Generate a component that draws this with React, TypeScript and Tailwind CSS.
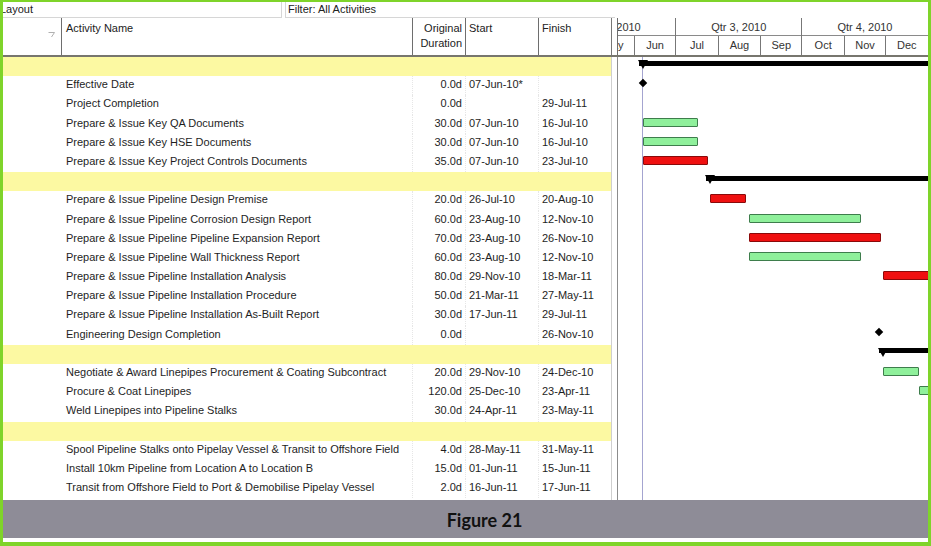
import React from "react";

type Task = {
  band?: false;
  name: string;
  dur: string;
  start?: string;
  finish?: string;
  bar?: "green" | "red" | "ms-start" | "ms-finish";
};
type Band = { band: true; from: string };
type Row = Task | Band;

const MONTHS = ["Jan", "Feb", "Mar", "Apr", "May", "Jun", "Jul", "Aug", "Sep", "Oct", "Nov", "Dec"];
const DAY = 86400000;
const PX_PER_DAY = 1.372;
const JUN_1 = Date.UTC(2010, 5, 1);
// x of 1 Jun 2010 inside the gantt pane
const X0 = 17;

function toTime(s: string) {
  const [d, m, y] = s.replace("*", "").split("-");
  return Date.UTC(2000 + Number(y), MONTHS.indexOf(m), Number(d));
}
const xAt = (t: number) => X0 + ((t - JUN_1) / DAY) * PX_PER_DAY;

const rows: Row[] = [
  { band: true, from: "07-Jun-10" },
  { name: "Effective Date", dur: "0.0d", start: "07-Jun-10*", bar: "ms-start" },
  { name: "Project Completion", dur: "0.0d", finish: "29-Jul-11", bar: "ms-finish" },
  { name: "Prepare & Issue Key QA Documents", dur: "30.0d", start: "07-Jun-10", finish: "16-Jul-10", bar: "green" },
  { name: "Prepare & Issue Key HSE Documents", dur: "30.0d", start: "07-Jun-10", finish: "16-Jul-10", bar: "green" },
  { name: "Prepare & Issue Key Project Controls Documents", dur: "35.0d", start: "07-Jun-10", finish: "23-Jul-10", bar: "red" },
  { band: true, from: "26-Jul-10" },
  { name: "Prepare & Issue Pipeline Design Premise", dur: "20.0d", start: "26-Jul-10", finish: "20-Aug-10", bar: "red" },
  { name: "Prepare & Issue Pipeline Corrosion Design Report", dur: "60.0d", start: "23-Aug-10", finish: "12-Nov-10", bar: "green" },
  { name: "Prepare & Issue Pipeline Pipeline Expansion Report", dur: "70.0d", start: "23-Aug-10", finish: "26-Nov-10", bar: "red" },
  { name: "Prepare & Issue Pipeline Wall Thickness Report", dur: "60.0d", start: "23-Aug-10", finish: "12-Nov-10", bar: "green" },
  { name: "Prepare & Issue Pipeline Installation Analysis", dur: "80.0d", start: "29-Nov-10", finish: "18-Mar-11", bar: "red" },
  { name: "Prepare & Issue Pipeline Installation Procedure", dur: "50.0d", start: "21-Mar-11", finish: "27-May-11", bar: "red" },
  { name: "Prepare & Issue Pipeline Installation As-Built Report", dur: "30.0d", start: "17-Jun-11", finish: "29-Jul-11", bar: "green" },
  { name: "Engineering Design Completion", dur: "0.0d", finish: "26-Nov-10", bar: "ms-finish" },
  { band: true, from: "29-Nov-10" },
  { name: "Negotiate & Award Linepipes Procurement & Coating Subcontract", dur: "20.0d", start: "29-Nov-10", finish: "24-Dec-10", bar: "green" },
  { name: "Procure & Coat Linepipes", dur: "120.0d", start: "25-Dec-10", finish: "23-Apr-11", bar: "green" },
  { name: "Weld Linepipes into Pipeline Stalks", dur: "30.0d", start: "24-Apr-11", finish: "23-May-11", bar: "green" },
  { band: true, from: "28-May-11" },
  { name: "Spool Pipeline Stalks onto Pipelay Vessel & Transit to Offshore Field", dur: "4.0d", start: "28-May-11", finish: "31-May-11", bar: "red" },
  { name: "Install 10km Pipeline from Location A to Location B", dur: "15.0d", start: "01-Jun-11", finish: "15-Jun-11", bar: "red" },
  { name: "Transit from Offshore Field to Port & Demobilise Pipelay Vessel", dur: "2.0d", start: "16-Jun-11", finish: "17-Jun-11", bar: "red" },
];

const quarters = [
  { label: "Qtr 2, 2010", from: Date.UTC(2010, 3, 1), to: Date.UTC(2010, 6, 1) },
  { label: "Qtr 3, 2010", from: Date.UTC(2010, 6, 1), to: Date.UTC(2010, 9, 1) },
  { label: "Qtr 4, 2010", from: Date.UTC(2010, 9, 1), to: Date.UTC(2011, 0, 1) },
];

const months = Array.from({ length: 9 }, (_, i) => {
  const from = Date.UTC(2010, 3 + i, 1);
  const to = Date.UTC(2010, 4 + i, 1);
  return { label: MONTHS[(3 + i) % 12], from, to };
});

function GanttRow({ row }: { row: Row }) {
  if (row.band) {
    const left = xAt(toTime(row.from)) - 4;
    return (
      <div className="relative h-[19.2px]">
        <div className="absolute top-[3.5px] right-0 h-[5px] bg-black" style={{ left }} />
        <svg className="absolute top-[3px]" style={{ left: left - 1 }} width="10" height="10" viewBox="0 0 10 10">
          <polygon points="0,0 10,0 5,9" fill="#000" />
        </svg>
      </div>
    );
  }
  let mark: React.ReactNode = null;
  if (row.bar === "ms-start" || row.bar === "ms-finish") {
    const d = row.bar === "ms-start" ? row.start! : row.finish!;
    const x = xAt(toTime(d)) - 0.5;
    mark = <div className="absolute top-[3.5px] h-[6px] w-[6px] rotate-45 bg-black" style={{ left: x - 3 }} />;
  } else if (row.bar && row.start && row.finish) {
    const left = xAt(toTime(row.start));
    const width = xAt(toTime(row.finish) + DAY) - left;
    mark = (
      <div
        className={
          row.bar === "green"
            ? "absolute top-[3px] h-[9px] rounded-[1px] border border-[#3e7d4c] bg-[#8ff09b]"
            : "absolute top-[3px] h-[9px] rounded-[1px] border border-[#8a0a0a] bg-[#ef1010]"
        }
        style={{ left, width }}
      />
    );
  }
  return <div className="relative h-[19.2px]">{mark}</div>;
}

function TableRow({ row }: { row: Row }) {
  if (row.band) return <div className="h-[19.2px] bg-[#fcf9a2]" />;
  return (
    <div className="flex h-[19.2px] text-[11px] leading-[14px] text-[#1e1e1e]">
      <div className="w-[58px]" />
      <div className="w-[351px] truncate pl-[5px] pt-[1px]">{row.name}</div>
      <div className="w-[53px] border-l border-dotted border-[#e6e6e6] pr-[3px] pt-[1px] text-right">{row.dur}</div>
      <div className="w-[73px] border-l border-dotted border-[#e6e6e6] pl-[3px] pt-[1px]">{row.start ?? ""}</div>
      <div className="w-[73px] border-l border-dotted border-[#e6e6e6] pl-[3px] pt-[1px]">{row.finish ?? ""}</div>
    </div>
  );
}

export default function App() {
  return (
    <div className="h-[546px] w-[931px] bg-[#7fd42a] pb-[4px] pl-[3px] pr-[3px] pt-[2px] font-['Liberation_Sans',Arial,sans-serif]">
      <div className="flex h-full flex-col overflow-hidden bg-white">
        {/* layout / filter bar */}
        <div className="flex h-[16px] text-[11px] leading-[15px] text-[#222]">
          <div className="-ml-[3px] w-[282px] border-b border-r border-[#d6d6d6] pl-0">Layout</div>
          <div className="ml-[3px] w-[330px] border-b border-l border-[#d6d6d6] pl-[2px]">Filter: All Activities</div>
        </div>

        {/* column headers */}
        <div className="flex h-[39px] border-b-2 border-[#77766e]">
          <div className="flex w-[609px] border-r border-[#777] text-[11px] leading-[15px] text-[#222]">
            <div className="flex w-[58px] items-start justify-end pr-[6px] pt-[14px]">
              <svg width="7" height="6" viewBox="0 0 7 6">
                <polyline points="0.5,0.5 6.5,0.5 3.5,5" fill="none" stroke="#b0b0b0" strokeWidth="1" />
              </svg>
            </div>
            <div className="w-[351px] border-l border-[#6e6e6e] pl-[4px] pt-[3px]">Activity Name</div>
            <div className="w-[53px] border-l border-[#6e6e6e] pr-[3px] pt-[3px] text-right">
              Original
              <br />
              Duration
            </div>
            <div className="w-[73px] border-l border-[#6e6e6e] pl-[3px] pt-[3px]">Start</div>
            <div className="w-[73px] border-l border-[#6e6e6e] pl-[3px] pt-[3px]">Finish</div>
          </div>
          <div className="w-[5px]" />
          <div className="relative flex-1 overflow-hidden border-l border-[#6e6e6e] text-[11px] leading-[18px] text-[#333]">
            <div className="relative h-[18px] border-b border-[#8a8a8a]">
              {quarters.map((q) => (
                <div
                  key={q.label}
                  className="absolute top-0 h-[18px] border-r border-[#777] text-center"
                  style={{ left: xAt(q.from), width: xAt(q.to) - xAt(q.from) }}
                >
                  {q.label}
                </div>
              ))}
            </div>
            <div className="relative h-[19px]">
              {months.map((m) => (
                <div
                  key={m.from}
                  className="absolute top-0 h-[19px] border-r border-[#777] text-center"
                  style={{ left: xAt(m.from), width: xAt(m.to) - xAt(m.from) }}
                >
                  {m.label}
                </div>
              ))}
            </div>
          </div>
        </div>

        {/* activities and bars */}
        <div className="flex h-[443px]">
          <div className="w-[609px] border-r border-[#cfcfcf]">
            {rows.map((r, i) => (
              <TableRow key={i} row={r} />
            ))}
          </div>
          <div className="w-[5px]" />
          <div className="relative flex-1 overflow-hidden border-l border-[#8c8c8c]">
            <div className="absolute bottom-0 top-0 w-px bg-[#a4a4d0]" style={{ left: xAt(toTime("07-Jun-10")) - 1 }} />
            {rows.map((r, i) => (
              <GanttRow key={i} row={r} />
            ))}
          </div>
        </div>

        {/* caption */}
        <div className="flex h-[38px] items-center justify-center bg-[#8e8c97] pl-[38px] pt-[3px] font-['Lato',sans-serif] text-[18px] font-bold text-[#111]">
          Figure 21
        </div>
        <div className="h-[4px]" />
      </div>
    </div>
  );
}
